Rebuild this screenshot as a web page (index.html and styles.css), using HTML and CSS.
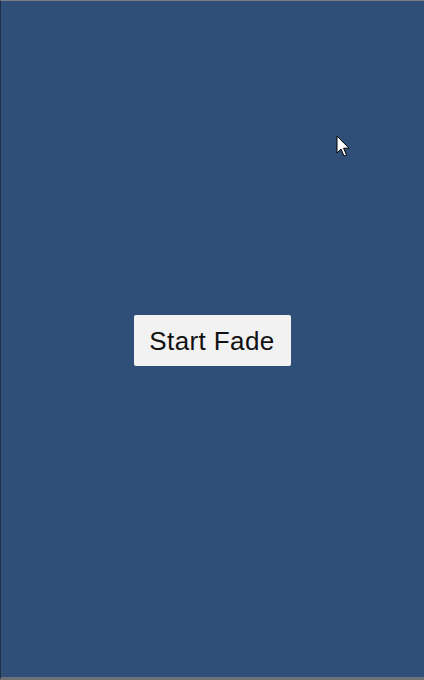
FILE: index.html
```html
<!DOCTYPE html>
<html>
<head>
<meta charset="utf-8">
<link rel="stylesheet" href="styles.css">
</head>
<body>
<div class="screen">
  <div class="stage">
    <button class="btn">Start Fade</button>
  </div>
  <svg class="cursor" width="15" height="23" viewBox="0 0 15 23">
    <path d="M1 1 L1 18 L5 14 L8 21 L10.5 20 L7.6 13.2 L13 13.2 Z" fill="#ffffff" stroke="#000000" stroke-width="1" stroke-linejoin="miter"/>
  </svg>
</div>
</body>
</html>
```
FILE: styles.css
```css
html, body {
  margin: 0;
  padding: 0;
  width: 424px;
  height: 680px;
  overflow: hidden;
}
.screen {
  position: relative;
  width: 424px;
  height: 680px;
  box-sizing: border-box;
  background: #2f4e78;
  border-top: 1px solid #7a7f86;
  border-left: 1px solid #1f2f45;
  border-bottom: 3px solid #6e7277;
  display: flex;
  flex-direction: column;
}
.stage {
  flex: 1;
  display: flex;
  align-items: center;
  justify-content: center;
  padding-right: 1px;
  padding-top: 3px;
}
.btn {
  width: 157px;
  height: 51px;
  background: #f2f2f2;
  border: none;
  border-radius: 2px;
  font-family: "Liberation Sans", Arial, sans-serif;
  font-size: 26px;
  letter-spacing: 0.4px;
  color: #111111;
  padding: 2px 0 0 0;
  margin: 0;
}
.cursor {
  position: absolute;
  left: 335px;
  top: 134px;
}
```
